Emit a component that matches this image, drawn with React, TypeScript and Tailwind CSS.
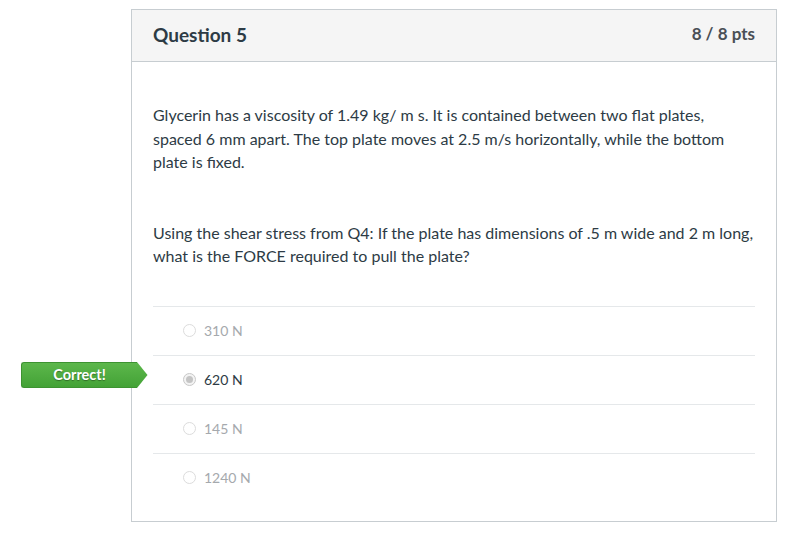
import React from "react";

const answers = [
  { label: "310 N", selected: false },
  { label: "620 N", selected: true },
  { label: "145 N", selected: false },
  { label: "1240 N", selected: false },
];

export default function App() {
  return (
    <div
      className="w-[796px] h-[533px] bg-white overflow-hidden"
      style={{ fontFamily: "Lato, 'Open Sans', sans-serif" }}
    >
      <div className="pt-[9px] pl-[131px]">
        <div className="w-[646px] h-[513px] border border-[#c7cdd1] flex flex-col">
          <div className="h-[52px] shrink-0 bg-[#f5f5f5] border-b border-[#c7cdd1] flex justify-between px-[21px]">
            <div className="text-[19px] font-bold text-[#2d3b45] pt-[11px]">Question 5</div>
            <div className="text-[17px] font-bold text-[#4a4f55] pt-[11px]">8 / 8 pts</div>
          </div>
          <div className="px-[21px] pt-[41px] text-[16px] leading-[23.5px] text-[#2d3b45]">
            <p>
              Glycerin has a viscosity of 1.49 kg/ m s. It is contained between two flat plates,
              spaced 6 mm apart. The top plate moves at 2.5 m/s horizontally, while the bottom
              plate is fixed.
            </p>
            <p className="mt-[47px]">
              Using the shear stress from Q4: If the plate has dimensions of .5 m wide and 2 m long,
              what is the FORCE required to pull the plate?
            </p>
            <div className="mt-[38px]">
              {answers.map((a, i) => (
                <div key={i} className="relative h-[49px] border-t border-[#e5e8ea] flex items-center pl-[30px]">
                  {a.selected && (
                    <div className="absolute left-[-132px] top-[6px] flex items-center">
                      <div className="w-[116px] h-[26px] rounded-l-[3px] bg-gradient-to-b from-[#5cb74b] to-[#43a236] border border-[#3d9331] border-r-0 flex items-center justify-center text-white text-[14.5px] font-bold [text-shadow:0_1px_1px_rgba(0,0,0,0.35)]">
                        Correct!
                      </div>
                      <svg width="11" height="26" viewBox="0 0 11 26" className="block">
                        <defs>
                          <linearGradient id="g" x1="0" y1="0" x2="0" y2="1">
                            <stop offset="0" stopColor="#5cb74b" />
                            <stop offset="1" stopColor="#43a236" />
                          </linearGradient>
                        </defs>
                        <path d="M0 0 L10.5 13 L0 26 Z" fill="url(#g)" />
                      </svg>
                    </div>
                  )}
                  <span
                    className={
                      "w-[13px] h-[13px] rounded-full border flex items-center justify-center " +
                      (a.selected ? "border-[#c8c8c8] bg-[#f3f3f3]" : "border-[#dcdcdc] bg-white")
                    }
                  >
                    {a.selected && <span className="w-[7px] h-[7px] rounded-full bg-[#c4c4c4]" />}
                  </span>
                  <span className={"ml-[8px] text-[14px] " + (a.selected ? "text-[#2d3b45]" : "text-[#a5a9ad]")}>
                    {a.label}
                  </span>
                </div>
              ))}
            </div>
          </div>
        </div>
      </div>
    </div>
  );
}
